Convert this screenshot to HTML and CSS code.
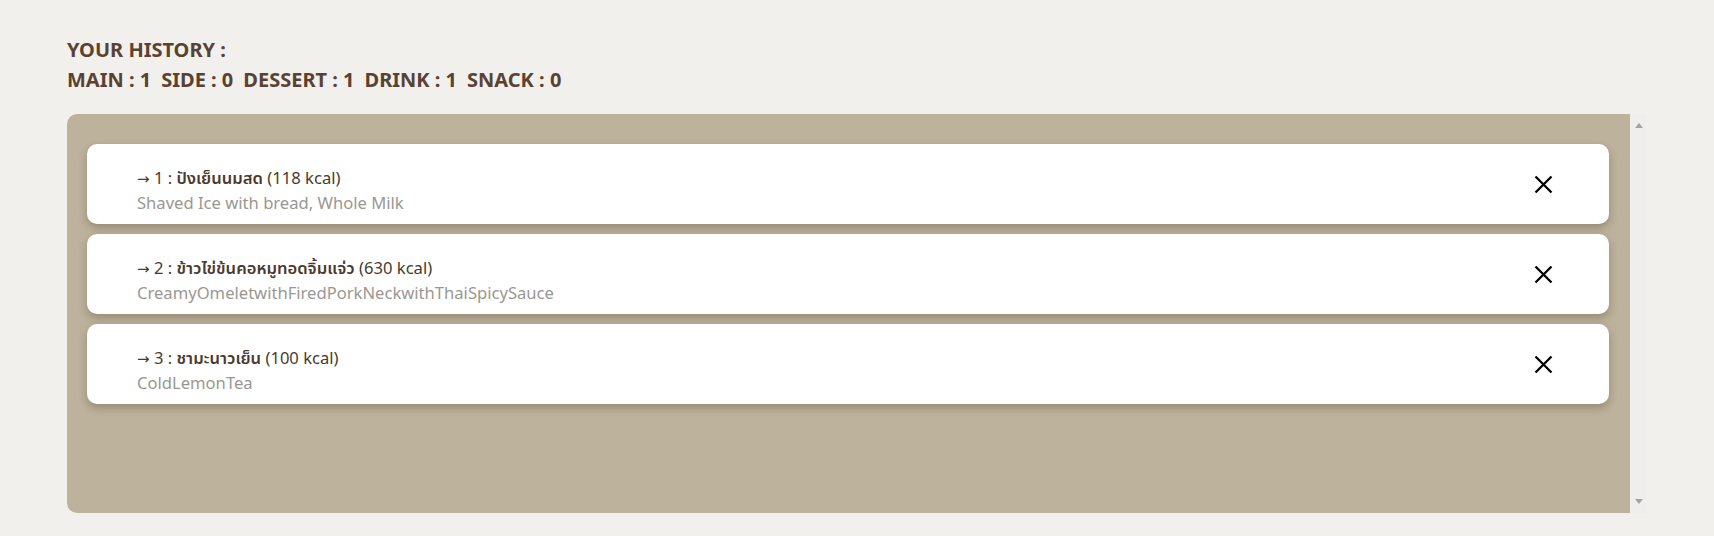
FILE: index.html
```html
<!DOCTYPE html>
<html lang="th">
<head>
<meta charset="utf-8">
<title>History</title>
<link rel="stylesheet" href="styles.css">
</head>
<body>
<main class="page">
  <header class="summary">
    <div class="summary-title">YOUR HISTORY :</div>
    <div class="summary-counts">
      <span class="count">MAIN : 1</span>
      <span class="count">SIDE : 0</span>
      <span class="count">DESSERT : 1</span>
      <span class="count">DRINK : 1</span>
      <span class="count">SNACK : 0</span>
    </div>
  </header>
  <div class="history-frame">
    <section class="history">
      <div class="item">
        <div class="item-text">
          <div class="item-title"><span class="arrow">→</span> 1 : <span class="thai">ปังเย็นนมสด</span> (118 kcal)</div>
          <div class="item-sub">Shaved Ice with bread, Whole Milk</div>
        </div>
        <button class="remove" aria-label="remove"><svg viewBox="0 0 19 19" width="19" height="19"><path d="M1.5 1.5 L17.5 17.5 M17.5 1.5 L1.5 17.5" stroke="#000" stroke-width="2.3" fill="none"/></svg></button>
      </div>
      <div class="item">
        <div class="item-text">
          <div class="item-title"><span class="arrow">→</span> 2 : <span class="thai">ข้าวไข่ข้นคอหมูทอดจิ้มแจ่ว</span> (630 kcal)</div>
          <div class="item-sub">CreamyOmeletwithFiredPorkNeckwithThaiSpicySauce</div>
        </div>
        <button class="remove" aria-label="remove"><svg viewBox="0 0 19 19" width="19" height="19"><path d="M1.5 1.5 L17.5 17.5 M17.5 1.5 L1.5 17.5" stroke="#000" stroke-width="2.3" fill="none"/></svg></button>
      </div>
      <div class="item">
        <div class="item-text">
          <div class="item-title"><span class="arrow">→</span> 3 : <span class="thai">ชามะนาวเย็น</span> (100 kcal)</div>
          <div class="item-sub">ColdLemonTea</div>
        </div>
        <button class="remove" aria-label="remove"><svg viewBox="0 0 19 19" width="19" height="19"><path d="M1.5 1.5 L17.5 17.5 M17.5 1.5 L1.5 17.5" stroke="#000" stroke-width="2.3" fill="none"/></svg></button>
      </div>
    </section>
    <div class="scrollbar" aria-hidden="true">
      <span class="scroll-arrow up"></span>
      <span class="scroll-arrow down"></span>
    </div>
  </div>
</main>
</body>
</html>
```

FILE: styles.css
```css
html, body {
  margin: 0;
  padding: 0;
  background: #f1f0ec;
}
body {
  font-family: "Noto Sans", "Noto Sans Thai", "Open Sans", sans-serif;
}
.page {
  padding: 35px 67px 0 67px;
}
.summary {
  color: #5a4232;
  font-weight: 700;
  font-size: 20px;
  line-height: 30px;
}
.summary-counts {
  display: flex;
  gap: 10px;
}
.history-frame {
  margin-top: 19px;
  height: 399px;
  display: flex;
}
.history {
  flex: 1;
  box-sizing: border-box;
  background: #bdb29c;
  border-radius: 10px 0 0 10px;
  padding: 30px 21px 30px 20px;
  display: flex;
  flex-direction: column;
  gap: 10px;
}
.scrollbar {
  width: 17px;
  background: #efeeed;
  display: flex;
  flex-direction: column;
  justify-content: space-between;
  align-items: center;
  padding: 9px 0;
}
.scroll-arrow {
  width: 0;
  height: 0;
  border-left: 4.5px solid transparent;
  border-right: 4.5px solid transparent;
}
.scroll-arrow.up {
  border-bottom: 5px solid #a3a3a3;
}
.scroll-arrow.down {
  border-top: 5px solid #a3a3a3;
}
.item {
  flex: 0 0 80px;
  box-sizing: border-box;
  background: #fff;
  border-radius: 10px;
  box-shadow: 0 4px 8px rgba(60, 45, 25, 0.3);
  display: flex;
  align-items: center;
  justify-content: space-between;
  padding: 0 56px 0 50px;
}
.item-text {
  padding-top: 12px;
  font-size: 16.6px;
  line-height: 25px;
}
.item-title {
  color: #4a3a2d;
  height: 25px;
}
.arrow {
  font-family: "DejaVu Sans", sans-serif;
  font-size: 15px;
  line-height: 1;
}
.thai {
  font-weight: 600;
  line-height: 1;
}
.item-sub {
  color: #9a9792;
  height: 25px;
}
.remove {
  border: 0;
  background: none;
  padding: 0;
  margin: 0;
  width: 19px;
  height: 19px;
  display: block;
  cursor: pointer;
}
.remove svg {
  display: block;
}
```
